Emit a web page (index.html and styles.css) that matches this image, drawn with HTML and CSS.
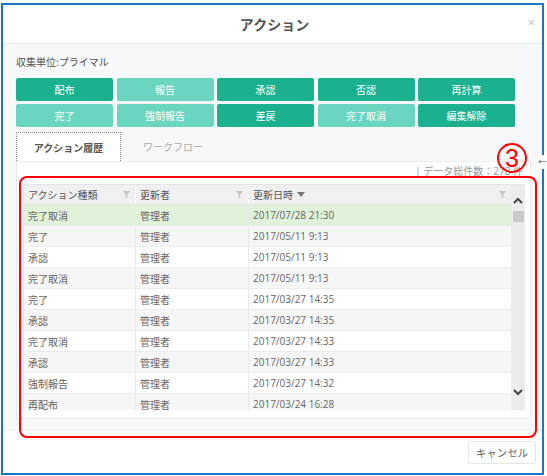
FILE: index.html
```html
<!DOCTYPE html>
<html lang="ja">
<head>
<meta charset="utf-8">
<link rel="stylesheet" href="styles.css">
</head>
<body>
<div class="frame">
  <div class="modal-header">
    <div class="title">アクション</div>
    <div class="close">×</div>
  </div>
  <div class="modal-body">
    <div class="unit">収集単位:プライマル</div>
    <div class="btn-grid">
      <div class="btn dark">配布</div>
      <div class="btn light">報告</div>
      <div class="btn dark">承認</div>
      <div class="btn dark">否認</div>
      <div class="btn dark">再計算</div>
      <div class="btn light">完了</div>
      <div class="btn light">強制報告</div>
      <div class="btn dark">差戻</div>
      <div class="btn light">完了取消</div>
      <div class="btn dark">編集解除</div>
    </div>
    <div class="tabs">
      <div class="tab active">アクション履歴</div>
      <div class="tab">ワークフロー</div>
    </div>
    <div class="panel">
      <div class="count">| データ総件数：278 件</div>
      <div class="grid">
        <div class="table">
          <div class="row head">
            <div class="cell c1"><span>アクション種類</span><svg class="filter" viewBox="0 0 8 8"><polygon points="0,0 8,0 5,4 5,8 3,8 3,4"/></svg></div>
            <div class="cell c2"><span>更新者</span><svg class="filter" viewBox="0 0 8 8"><polygon points="0,0 8,0 5,4 5,8 3,8 3,4"/></svg></div>
            <div class="cell c3"><span>更新日時 <svg class="sort" viewBox="0 0 8 6"><polygon points="0,0 8,0 4,5"/></svg></span><svg class="filter" viewBox="0 0 8 8"><polygon points="0,0 8,0 5,4 5,8 3,8 3,4"/></svg></div>
          </div>
          <div class="row sel"><div class="cell c1">完了取消</div><div class="cell c2">管理者</div><div class="cell c3">2017/07/28 21:30</div></div>
          <div class="row alt"><div class="cell c1">完了</div><div class="cell c2">管理者</div><div class="cell c3">2017/05/11 9:13</div></div>
          <div class="row"><div class="cell c1">承認</div><div class="cell c2">管理者</div><div class="cell c3">2017/05/11 9:13</div></div>
          <div class="row alt"><div class="cell c1">完了取消</div><div class="cell c2">管理者</div><div class="cell c3">2017/05/11 9:13</div></div>
          <div class="row"><div class="cell c1">完了</div><div class="cell c2">管理者</div><div class="cell c3">2017/03/27 14:35</div></div>
          <div class="row alt"><div class="cell c1">承認</div><div class="cell c2">管理者</div><div class="cell c3">2017/03/27 14:35</div></div>
          <div class="row"><div class="cell c1">完了取消</div><div class="cell c2">管理者</div><div class="cell c3">2017/03/27 14:33</div></div>
          <div class="row alt"><div class="cell c1">承認</div><div class="cell c2">管理者</div><div class="cell c3">2017/03/27 14:33</div></div>
          <div class="row"><div class="cell c1">強制報告</div><div class="cell c2">管理者</div><div class="cell c3">2017/03/27 14:32</div></div>
          <div class="row alt"><div class="cell c1">再配布</div><div class="cell c2">管理者</div><div class="cell c3">2017/03/24 16:28</div></div>
        </div>
        <div class="scrollbar">
          <svg class="chev up" viewBox="0 0 10 7"><polyline points="1,6 5,2 9,6"/></svg>
          <div class="thumb"></div>
          <div class="spacer"></div>
          <svg class="chev down" viewBox="0 0 10 7"><polyline points="1,1 5,5 9,1"/></svg>
        </div>
      </div>
    </div>
  </div>
  <div class="modal-footer">
    <div class="cancel">キャンセル</div>
  </div>
</div>
<div class="annot-box"></div>
<div class="annot-num">3</div>
<div class="side-arrow">←</div>
</body>
</html>
```
FILE: styles.css
```css
html, body {
  margin: 0;
  padding: 0;
  background: #ffffff;
}
body {
  position: relative;
  width: 547px;
  height: 476px;
  overflow: hidden;
  font-family: "Open Sans", "Noto Sans CJK JP", sans-serif;
  font-size: 10px;
  color: #666;
}
.frame {
  position: absolute;
  left: 1px;
  top: 3px;
  width: 543px;
  height: 472px;
  box-sizing: border-box;
  border: 2px solid #1b76c4;
  background: #fff;
  display: flex;
  flex-direction: column;
}
.modal-header {
  position: relative;
  height: 38px;
  border-bottom: 1px solid #e8e9eb;
  display: flex;
  align-items: center;
  justify-content: center;
  flex: none;
}
.title {
  font-family: "Noto Sans CJK JP", sans-serif;
  font-size: 14px;
  font-weight: bold;
  color: #555;
  margin-left: 4px;
}
.close {
  position: absolute;
  right: 7px;
  top: 10px;
  font-family: "Liberation Sans", sans-serif;
  font-size: 13px;
  color: #c4c4c4;
}
.modal-body {
  flex: none;
  height: 387px;
  box-sizing: border-box;
  background: #f7f8fa;
  padding: 11px 10px 0 13px;
  border-bottom: 1px solid #eceef0;
}
.unit {
  font-family: "Noto Sans CJK JP", sans-serif;
  line-height: 14px;
  color: #555;
}
.btn-grid {
  margin-top: 9px;
  width: 499px;
  display: grid;
  grid-template-columns: repeat(5, 1fr);
  column-gap: 3.5px;
  row-gap: 3px;
}
.btn {
  height: 23px;
  border-radius: 2px;
  color: #fff;
  display: flex;
  align-items: center;
  justify-content: center;
  font-family: "Noto Sans CJK JP", sans-serif;
}
.btn.dark { background: #1bb18f; }
.btn.light { background: #6bd6c0; }
.tabs {
  margin-top: 5px;
  display: flex;
  height: 29px;
}
.tab {
  font-family: "Noto Sans CJK JP", sans-serif;
  color: #aaa;
  display: flex;
  align-items: center;
  padding: 0 22px;
}
.tab.active {
  width: 105px;
  box-sizing: border-box;
  justify-content: center;
  padding: 0;
  background: #fff;
  color: #555;
  font-weight: bold;
  border: 1px dotted #888;
  border-bottom: none;
}
.panel {
  width: 515px;
  height: 258px;
  box-sizing: border-box;
  background: #fff;
  border: 1px solid #eaeaea;
  border-top: 1px solid #ececec;
  padding: 2px 5px 0 6px;
}
.count {
  text-align: right;
  line-height: 14px;
  color: #999;
  padding-right: 2px;
  font-family: "Open Sans", "Noto Sans CJK JP", sans-serif;
}
.grid {
  margin-top: 6px;
  height: 225px;
  display: flex;
  border-top: 1px solid #e4e4e4;
  border-left: 1px solid #e8e8e8;
}
.table {
  flex: 1;
  overflow: hidden;
}
.row {
  display: flex;
  height: 21px;
  box-sizing: border-box;
  border-bottom: 1px solid #ececec;
  background: #fff;
}
.row.alt { background: #f6f6f6; }
.row.sel { background: #e1f2da; }
.row.head {
  height: 20px;
  background: #f0f0f0;
  color: #555;
  border-bottom: 1px solid #e6e6e6;
}
.cell {
  padding-left: 4px;
  display: flex;
  align-items: center;
  box-sizing: border-box;
  border-right: 1px solid #e9e9e9;
  font-family: "Open Sans", "Noto Sans CJK JP", sans-serif;
  white-space: nowrap;
}
.c1 { width: 112px; }
.c2 { width: 113px; }
.c3 { flex: 1; border-right: none; }
.head .cell {
  justify-content: space-between;
  padding-right: 5px;
  border-right: 1px solid #fafafa;
}
.head .c3 { border-right: none; }
.filter {
  width: 7px;
  height: 7px;
  fill: #c6c6c6;
}
.sort {
  width: 8px;
  height: 6px;
  fill: #777;
  margin-left: 1px;
  vertical-align: 1px;
}
.scrollbar {
  width: 14px;
  flex: none;
  background: #ececec;
  display: flex;
  flex-direction: column;
  align-items: center;
}
.chev {
  width: 10px;
  height: 7px;
  fill: none;
  stroke: #444;
  stroke-width: 2;
  flex: none;
}
.chev.up { margin-top: 12px; }
.thumb {
  margin-top: 7px;
  width: 11px;
  height: 11px;
  background: #c9c9c9;
  flex: none;
}
.spacer { flex: 1; }
.chev.down { margin-bottom: 14px; }
.modal-footer {
  flex: 1;
  display: flex;
  justify-content: flex-end;
  align-items: flex-start;
  padding: 10px 6px 0 0;
}
.cancel {
  width: 68px;
  height: 23px;
  box-sizing: border-box;
  border: 1px solid #e6e6e6;
  border-radius: 2px;
  display: flex;
  align-items: center;
  justify-content: center;
  font-family: "Noto Sans CJK JP", sans-serif;
  color: #666;
  font-size: 10.5px;
}
.annot-box {
  position: absolute;
  left: 19px;
  top: 176px;
  width: 518px;
  height: 262px;
  box-sizing: border-box;
  border: 2.5px solid #f00;
  border-radius: 8px;
}
.annot-num {
  position: absolute;
  left: 497px;
  top: 143px;
  width: 30px;
  height: 30px;
  box-sizing: border-box;
  border: 2px solid #f00;
  border-radius: 50%;
  color: #f00;
  font-family: "Liberation Sans", sans-serif;
  font-size: 25px;
  line-height: 26px;
  text-align: center;
}
.side-arrow {
  position: absolute;
  left: 538px;
  top: 155px;
  font-family: "DejaVu Sans", sans-serif;
  font-size: 10px;
  color: #777;
  background: #fff;
  line-height: 14px;
}
```
